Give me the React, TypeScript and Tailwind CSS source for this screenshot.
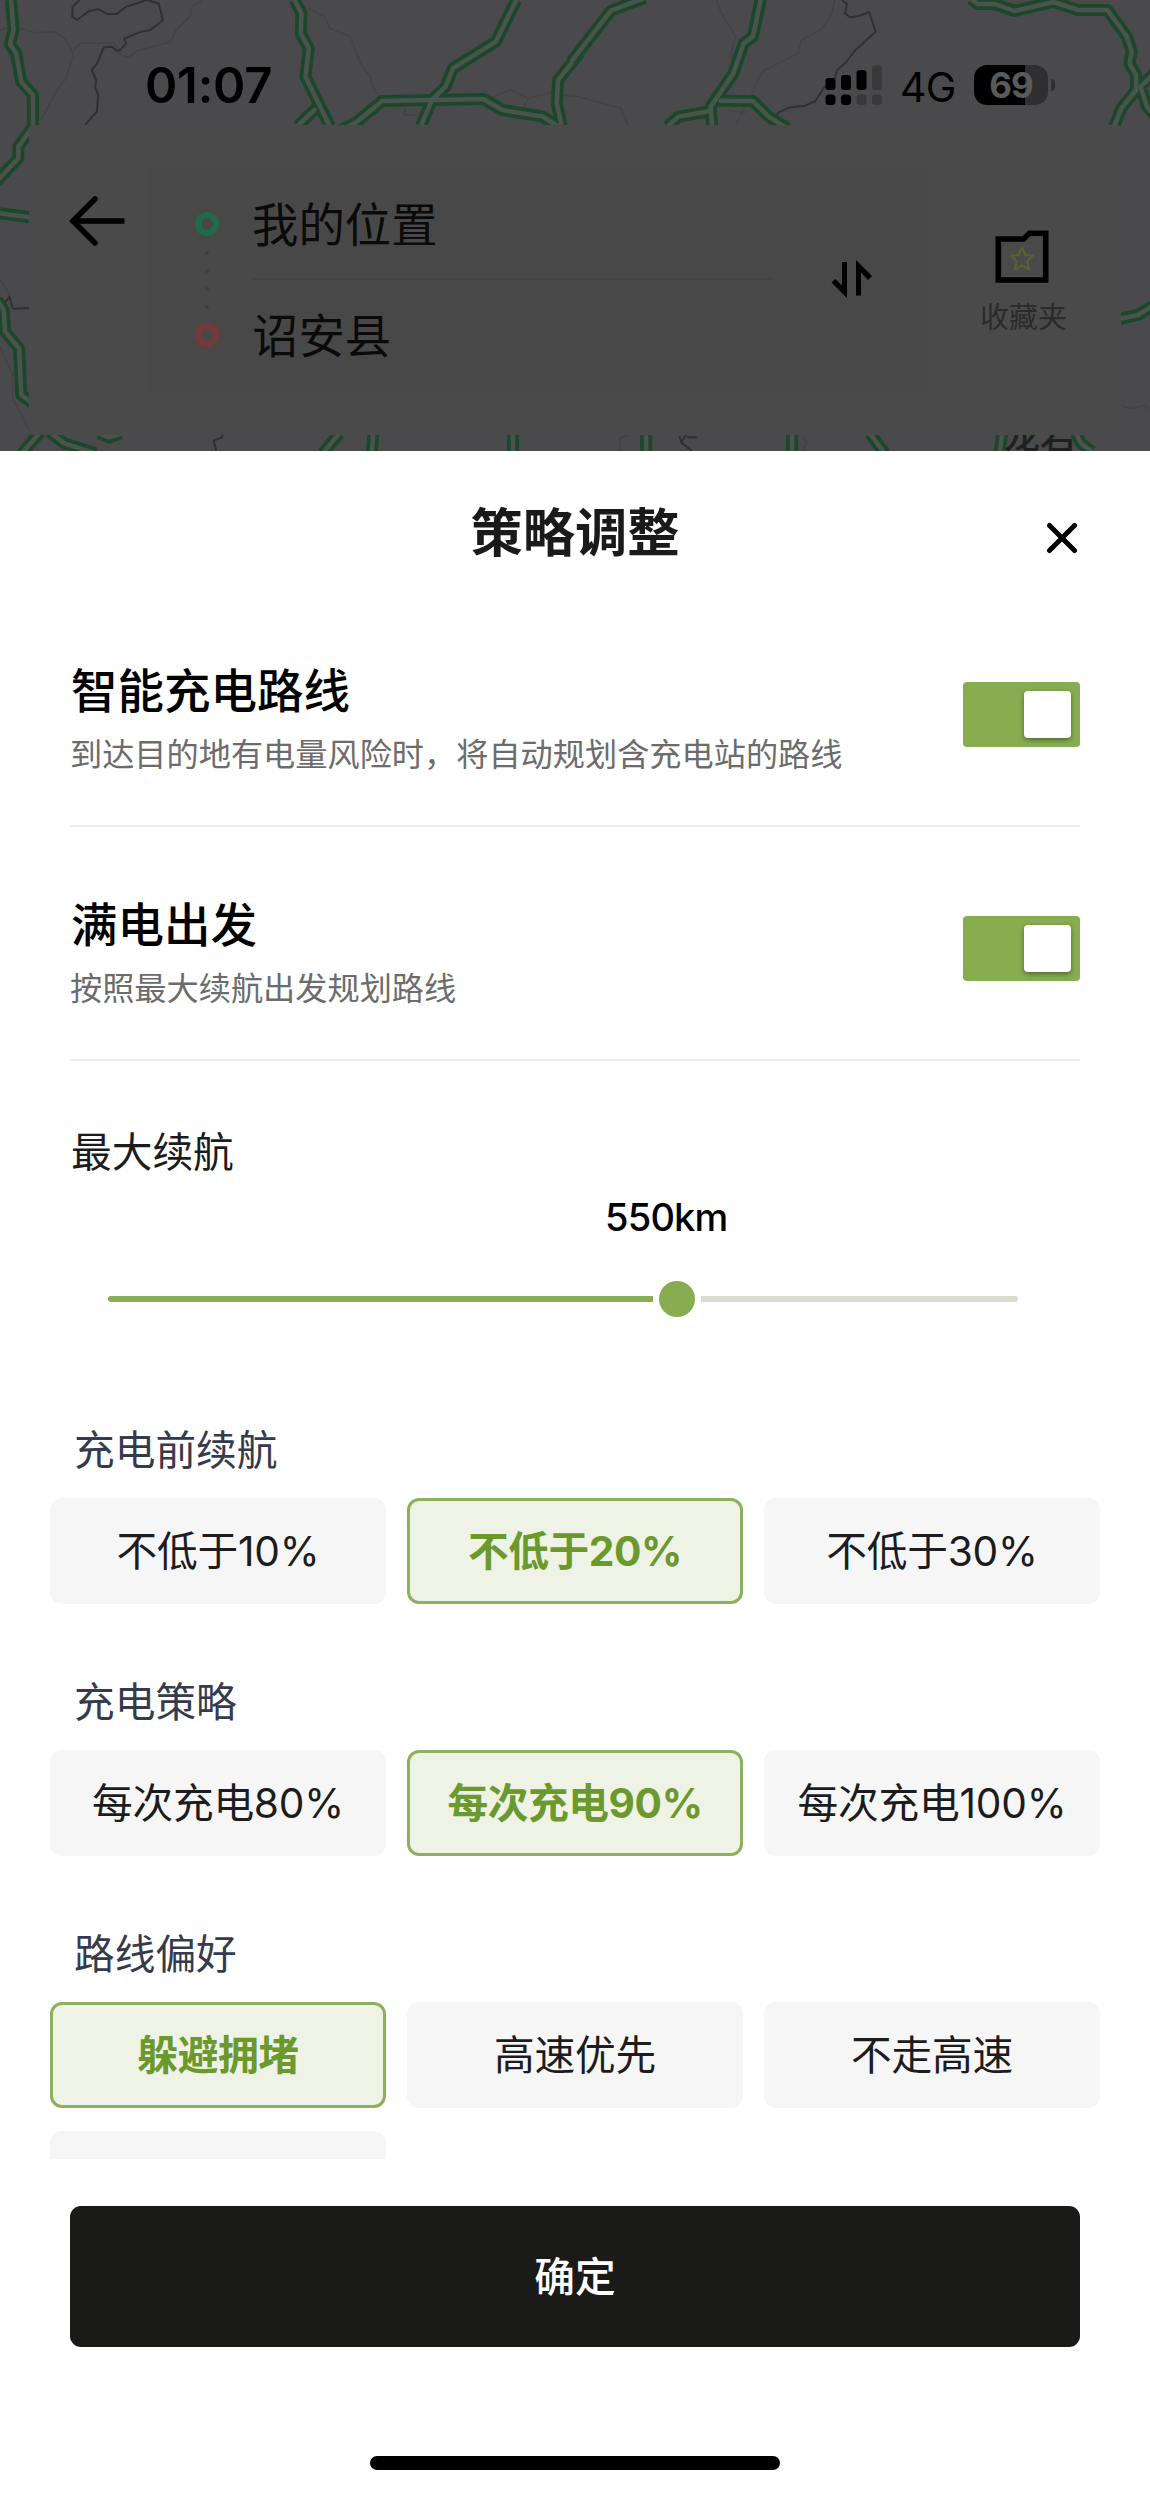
import React from "react";

const FONT = "font-['Inter','Noto_Sans_CJK_SC',sans-serif]";

type Sheet = { transform: string; roads: string[]; borders: string[]; minor: string[] };

const TILES: Sheet[] = [
  {
    transform: "scale(0.3667 0.3333)",
    roads: [
      "M30 0 L37 90 L27 133 L44 160 L58 245 L90 285 L90 380 L50 440 L50 475 L-10 545",
      "M0 640 L80 652",
      "M803 0 L822 40 L820 100 L842 145 L833 230 L900 380",
      "M862 325 L812 378",
      "M1408 0 L1352 125 L1235 205 L1215 260 L1178 300 L1148 378",
      "M925 392 L970 368 L1042 303 L1318 297 L1370 330 L1480 350 L1530 385",
      "M1580 160 L1522 240 L1518 310 L1532 378",
    ],
    borders: [
      "M217 0 L198 20 L197 50 L210 60 L245 32 L270 28 L292 42 L318 42 L345 20 L400 0 M400 0 L432 10 L440 40 L444 60 L410 90 L385 95 L338 116 L344 130 L328 150 L318 152 L305 140 L283 142 L265 190 L250 210 L262 240 L260 265 L268 285 L264 335 L232 375",
    ],
    minor: [
      "M0 90 L45 80 L95 98 L150 95 L180 120 L200 160 L180 235 L150 280 L112 360 M200 150 L220 130 L310 128 L330 165 L350 172 L375 152 L465 125 L480 90 L518 50 L525 20 L550 0",
      "M840 25 L885 50 L900 85 L955 110 L985 195 L1010 230 L1020 270 L1045 300 M1330 300 L1390 268 L1440 295 L1500 278 L1568 290 M1440 295 L1425 330 M1105 325 L1102 345 L1135 345",
    ],
  },
  {
    transform: "translate(575 0) scale(0.3667 0.3333)",
    roads: [
      "M190 -6 L98 32 L-10 185",
      "M507 -4 L485 110 L460 130 L432 220 L370 320 L374 378",
      "M252 380 L282 350 L366 334",
      "M392 302 L485 303 L528 350 L580 385",
      "M1080 -4 L1098 12 L1145 12 L1198 33 L1305 6 L1372 30 L1452 30 L1505 110 L1518 155 L1512 190 L1530 225 L1530 270 L1490 325 L1470 380",
      "M1580 220 L1542 260 L1560 320 L1580 345",
    ],
    borders: [
      "M728 0 L742 12 L736 40 L750 52 L775 48 L802 36 L820 95 L765 150 L740 185 L715 210 L708 235 L680 262 L655 304 L625 318 L585 322 L555 338 L540 355",
    ],
    minor: [
      "M385 0 L400 40 L438 110 L425 160 L432 190 M0 288 L60 305 L125 325 L145 378 M708 0 L700 40 L675 85 L618 120 L608 160 L515 212 L495 245 L480 290 M462 325 L440 372 M415 330 L465 338",
    ],
  },
  {
    transform: "translate(0 220) scale(0.3667 0.3333)",
    roads: [
      "M-8 240 L10 270 L14 335 L52 385 L58 525 L90 550",
      "M110 636 L60 700",
      "M135 636 L175 670 L260 700",
      "M270 640 L298 652 L330 640",
      "M925 640 L880 700",
      "M1018 640 L1014 700",
      "M1399 640 L1399 700",
    ],
    borders: ["M0 235 L14 248 L26 230 L35 266 L80 264 M608 640 L606 652 L582 662 L590 692"],
    minor: ["M0 180 L20 210 L26 235 M0 380 L34 460 L36 540 L80 630"],
  },
  {
    transform: "translate(575 220) scale(0.3667 0.3333)",
    roads: [
      "M1480 298 L1535 285 L1580 255",
      "M194 640 L194 700",
      "M592 640 L592 700",
      "M804 640 L845 700",
      "M1165 640 L1158 700",
      "M1366 640 L1380 670 L1410 695",
    ],
    borders: ["M285 648 L290 668 L318 692 M290 668 L305 640 M305 652 L332 652"],
    minor: ["M1490 558 L1520 566 L1555 555 L1570 575 M150 645 L122 655 L125 690 M620 650 L632 668 L622 690"],
  },
];

function MapBackdrop() {
  const common = { fill: "none", vectorEffect: "non-scaling-stroke" as const, strokeLinejoin: "round" as const };
  return (
    <svg className="absolute inset-0 h-full w-full" viewBox="0 0 1150 451" preserveAspectRatio="none">
      {TILES.map((t) => (
        <g key={t.transform} transform={t.transform}>
          {t.minor.map((d) => (
            <path key={d} d={d} {...common} stroke="#424344" strokeWidth={1.5} />
          ))}
          {t.borders.map((d) => (
            <path key={d} d={d} {...common} stroke="#313132" strokeWidth={2} />
          ))}
          {t.roads.map((d) => (
            <path key={d} d={d} {...common} stroke="#1c472d" strokeWidth={12} />
          ))}
          {t.roads.map((d) => (
            <path key={d} d={d} {...common} stroke="#4b544c" strokeWidth={4.5} />
          ))}
        </g>
      ))}
    </svg>
  );
}

function StatusBar() {
  return (
    <div className="relative flex h-[125px] items-start text-black">
      <span className="ml-[145px] mt-[57px] text-[49px] font-semibold leading-[58px] tracking-[-0.2px]">01:07</span>
      <div className="ml-auto mr-[95px] mt-[65px] flex h-10 items-center">
        <svg width="58" height="40" viewBox="0 0 58 40">
          <g fill="#000">
            <rect x="0.5" y="13" width="10" height="12" rx="3" />
            <rect x="16" y="10" width="10" height="15" rx="3" />
            <rect x="31.5" y="5" width="10" height="20" rx="3" />
            <rect x="0.5" y="29.5" width="10" height="10.5" rx="3.5" />
            <rect x="16" y="29.5" width="10" height="10.5" rx="3.5" />
          </g>
          <g fill="#39393a">
            <rect x="47" y="0.5" width="10" height="24.5" rx="3" />
            <rect x="31.5" y="29.5" width="10" height="10.5" rx="3.5" />
            <rect x="47" y="29.5" width="10" height="10.5" rx="3.5" />
          </g>
        </svg>
        <span className="ml-[17px] mt-[3px] w-[56px] whitespace-nowrap text-[41px] leading-10 tracking-[-0.8px]">4G</span>
        <div className="ml-[18px] flex h-10 w-[74px] items-center justify-center rounded-[13px] bg-[linear-gradient(90deg,#000_51px,#2f2f31_51px)] text-[35px] font-bold leading-10 tracking-[-1px] text-[#5a5a5b]">
          69
        </div>
        <div className="ml-[3px] h-[12px] w-[4px] rounded-r-full bg-[#313133]" />
      </div>
    </div>
  );
}

function SearchCard() {
  return (
    <div className="relative mx-[29px] flex h-[310px] rounded-[4px] bg-[#4a4a4a]">
      <svg className="ml-[39px] mt-[70px] shrink-0" width="58" height="52" viewBox="0 0 58 52" fill="none" stroke="#000" strokeWidth="5.6">
        <path d="M56.5 26H5" />
        <path d="M27 4L5 26l22 22" strokeLinecap="round" />
      </svg>
      <div className="ml-[22px] mt-[43px] flex h-[224px] w-[780px] shrink-0 rounded-[6px] bg-[#484848]">
        <div className="ml-[47px] mt-[44px] flex w-6 shrink-0 flex-col items-center">
          <span className="h-6 w-6 rounded-full border-[6px] border-[#1f6b4b]" />
          <div className="flex h-[87px] flex-col items-center justify-center gap-[14px]">
            <i className="h-[4px] w-[4px] rounded-full bg-[#3d3d3e]" />
            <i className="h-[4px] w-[4px] rounded-full bg-[#3d3d3e]" />
            <i className="h-[4px] w-[4px] rounded-full bg-[#3d3d3e]" />
            <i className="h-[4px] w-[4px] rounded-full bg-[#3d3d3e]" />
          </div>
          <span className="h-6 w-6 rounded-full border-[6px] border-[#78373a]" />
        </div>
        <div className="ml-[33px] flex w-[522px] flex-col text-[46.4px] leading-[60px] text-[#0a0a0a]">
          <span className="flex h-[112px] items-center border-b-2 border-[#434343] pt-[3px]">我的位置</span>
          <span className="flex h-[111px] items-center">诏安县</span>
        </div>
        <svg className="ml-[57px] mt-[91px]" width="42" height="40" viewBox="0 0 42 40" fill="#000">
          <path d="M11 3H16V39L0.5 23.5L4.5 20L11 26.5Z" />
          <path d="M25 1L41 17L37 21L30 13.5V36.5H25Z" />
        </svg>
      </div>
      <div className="flex flex-1 flex-col items-center pt-[105px]">
        <svg width="54" height="54" viewBox="0 0 54 54" fill="none" className="mr-[5px]">
          <path d="M3.3 9H28.5L34.5 3.2H50.7V50H3.3Z" stroke="#000" strokeWidth="5.6" />
          <path
            d="M27 17.5L30.3 25L38 25.8L32.3 31.2L34 39.5L27 35.5L20 39.5L21.7 31.2L16 25.8L23.7 25Z"
            stroke="#56632a"
            strokeWidth="2"
            strokeLinejoin="round"
          />
        </svg>
        <span className="mr-[2px] mt-[14px] text-[29px] leading-10 text-[#2b2b2b]">收藏夹</span>
      </div>
    </div>
  );
}

function Toggle() {
  return (
    <div className="flex h-[65px] w-[117px] items-center justify-end rounded-[4px] bg-[#87ad50] pr-[9px]">
      <div className="h-[47px] w-[47px] rounded-[4px] bg-white shadow-[0_2px_5px_rgba(0,0,0,0.4)]" />
    </div>
  );
}

function SettingRow({ title, note }: { title: string; note: string }) {
  return (
    <div className="flex h-[234px] items-start justify-between border-b-2 border-[#ededed]">
      <div className="flex flex-col pt-[66px]">
        <h2 className="ml-px text-[46.5px] font-medium leading-[64px] text-black">{title}</h2>
        <p className="mt-[9px] text-[32.2px] leading-[46px] text-[#6c6c6c]">{note}</p>
      </div>
      <div className="mt-[89px]">
        <Toggle />
      </div>
    </div>
  );
}

function Options({ label, items, active }: { label: string; items: string[]; active: number }) {
  return (
    <section className="mb-[62px] shrink-0">
      <h3 className="ml-[24px] h-[84px] pt-[9px] text-[40.7px] leading-[56px] text-[#363b4b]">{label}</h3>
      <div className="grid grid-cols-3 gap-x-[21px] gap-y-[23px]">
        {items.map((item, i) => (
          <div
            key={item}
            className={
              i === active
                ? "flex h-[106px] items-center justify-center rounded-[12px] border-[3px] border-[#8db05c] bg-[#eef3e5] pt-[2px] text-[40.7px] font-bold tracking-[-0.4px] text-[#6b992e]"
                : "flex h-[106px] items-center justify-center rounded-[12px] bg-[#f6f6f6] pt-[2px] text-[40.7px] tracking-[-0.2px] text-[#1c1c1e]"
            }
          >
            {item}
          </div>
        ))}
      </div>
    </section>
  );
}

export default function App() {
  return (
    <div className={`flex h-[2493px] w-[1150px] flex-col overflow-hidden bg-white ${FONT}`}>
      <header className="relative h-[451px] shrink-0 overflow-hidden bg-[#4a4a4c]">
        <MapBackdrop />
        <span className="absolute left-[1004px] top-[420px] text-[36px] font-medium leading-[32px] text-[#202021]">龙岩</span>
        <StatusBar />
        <SearchCard />
      </header>

      <div className="relative flex h-[142px] shrink-0 items-start justify-center pt-[46px]">
        <h1 className="text-[52.3px] font-bold leading-[72px] text-[#1a1a1a]">策略调整</h1>
        <svg className="absolute left-[1046px] top-[71px]" width="32" height="32" viewBox="0 0 32 32" stroke="#000" strokeWidth="5" strokeLinecap="round">
          <path d="M3.5 3.5l25 25M28.5 3.5l-25 25" />
        </svg>
      </div>

      <div className="mx-[70px] shrink-0">
        <SettingRow title="智能充电路线" note="到达目的地有电量风险时，将自动规划含充电站的路线" />
        <SettingRow title="满电出发" note="按照最大续航出发规划路线" />
        <h3 className="ml-px mt-[64px] text-[40.7px] leading-[56px] text-[#1c1c1e]">最大续航</h3>
        <div className="ml-[535px] mt-[12px] text-[38px] font-medium leading-[48px] tracking-[-0.8px] text-black">550km</div>
        <div className="ml-[38px] mt-[40px] flex h-9 w-[910px] items-center">
          <div className="h-[6px] w-[545px] rounded-l-full bg-[#8aad58]" />
          <div className="mx-[6px] h-9 w-9 rounded-full bg-[#87ad50]" />
          <div className="h-[6px] flex-1 rounded-r-full bg-[#d9dcd0]" />
        </div>
      </div>

      <div className="mt-[97px] flex h-[745px] shrink-0 flex-col overflow-hidden px-[50px]">
        <Options label="充电前续航" items={["不低于10%", "不低于20%", "不低于30%"]} active={1} />
        <Options label="充电策略" items={["每次充电80%", "每次充电90%", "每次充电100%"]} active={1} />
        <Options label="路线偏好" items={["躲避拥堵", "高速优先", "不走高速", ""]} active={0} />
      </div>

      <button className="mx-[70px] mt-[47px] flex h-[141px] shrink-0 items-center justify-center rounded-[11px] bg-[#1a1a18] pt-[2px] text-[40.7px] font-medium text-white">
        确定
      </button>
      <div className="mx-auto mt-[109px] h-[14px] w-[410px] shrink-0 rounded-full bg-black" />
    </div>
  );
}
